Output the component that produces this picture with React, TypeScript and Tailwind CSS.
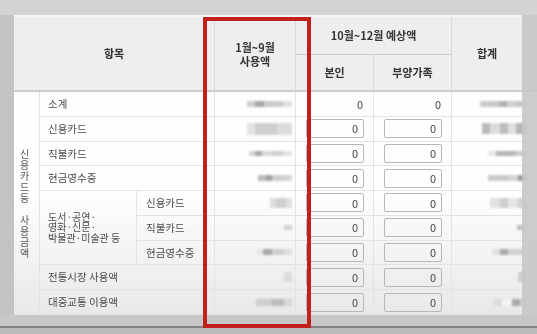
import React from 'react'

type Seg = [number, string]

const Blob = ({ segs, h }: { segs: Seg[]; h: number }) => (
  <div className="flex blur-[1.2px]" style={{ height: h }}>
    {segs.map(([w, c], i) => (
      <span key={i} style={{ width: w, background: c }} />
    ))}
  </div>
)

const usedBlobs: { segs: Seg[]; h: number }[] = [
  { segs: [[8, '#d0d0d0'], [9, '#a6a6a6'], [9, '#c8c8c8'], [10, '#cdcdcd'], [9, '#e2e2e2']], h: 6 },
  { segs: [[8, '#e4e4e4'], [22, '#cfcfcf'], [15, '#dcdcdc']], h: 12 },
  { segs: [[6, '#d8d8d8'], [7, '#a9a9a9'], [10, '#dcdcdc'], [11, '#d0d0d0'], [9, '#e4e4e4']], h: 5 },
  { segs: [[8, '#bcbcbc'], [6, '#a0a0a0'], [10, '#cfcfcf'], [10, '#d6d6d6']], h: 6 },
  { segs: [[6, '#dedede'], [10, '#cfcfcf'], [6, '#e0e0e0']], h: 10 },
  { segs: [[8, '#d4d4d4']], h: 5 },
  { segs: [[6, '#e6e6e6'], [9, '#a8a8a8'], [12, '#cfcfcf'], [8, '#dedede']], h: 6 },
  { segs: [[8, '#dcdcdc']], h: 10 },
  { segs: [[16, '#cfcfcf'], [12, '#bdbdbd'], [8, '#d8d8d8']], h: 7 },
]

const totalBlobs: { segs: Seg[]; h: number }[] = [
  { segs: [[10, '#cdcdcd'], [9, '#c9c9c9'], [8, '#b0b0b0'], [10, '#cdcdcd'], [9, '#c5c5c5']], h: 6 },
  { segs: [[8, '#b9b9b9'], [10, '#dedede'], [8, '#bcbcbc'], [8, '#e0e0e0'], [10, '#b6b6b6']], h: 11 },
  { segs: [[8, '#e8e8e8'], [20, '#b5b5b5'], [10, '#cdcdcd']], h: 5 },
  { segs: [[20, '#cbcbcb'], [10, '#d5d5d5'], [8, '#9d9d9d']], h: 6 },
  { segs: [[10, '#e2e2e2'], [8, '#cfcfcf'], [10, '#e6e6e6'], [8, '#d2d2d2']], h: 10 },
  { segs: [[9, '#bfbfbf']], h: 5 },
  { segs: [[8, '#e3e3e3'], [8, '#a9a9a9'], [18, '#d2d2d2']], h: 6 },
  { segs: [[8, '#cfcfcf']], h: 10 },
  { segs: [[8, '#dcdcdc'], [10, '#f3f3f3'], [8, '#a9a9a9'], [6, '#cfcfcf']], h: 7 },
]

const cell = 'border-r border-b border-[#e4e4e4] flex items-center text-[#4a4a4a]'
const head = 'border-r border-[#dadada] bg-[#efefef] flex items-center justify-center font-bold text-[#333] text-[11px]'

const Box = () => (
  <div className={`${cell} justify-end pr-[9px]`}>
    <div className="w-[58px] h-[19px] border border-[#b7b7b7] rounded-[2px] flex items-center justify-end pr-[5px] text-[11px] text-[#444]">
      0
    </div>
  </div>
)

const Rest = ({ i, input }: { i: number; input: boolean }) => (
  <>
    <div className={`${cell} justify-end pr-[3px]`}>
      <Blob {...usedBlobs[i]} />
    </div>
    {input ? (
      <>
        <Box />
        <Box />
      </>
    ) : (
      <>
        <div className={`${cell} justify-end pr-[10px] text-[11px] !text-[#444]`}>0</div>
        <div className={`${cell} justify-end pr-[10px] text-[11px] !text-[#444]`}>0</div>
      </>
    )}
    <div className="border-b border-[#e4e4e4] flex items-center justify-end pr-[11px]">
      <Blob {...totalBlobs[i]} />
    </div>
  </>
)

export default function App() {
  return (
    <div className="w-[537px] h-[334px] bg-[#c6c6c6] relative overflow-hidden font-['Noto_Sans_CJK_KR','Noto_Sans',sans-serif]">
      <div className="h-[15px] bg-[#d4d4d4]" />
      <div className="flex">
        <div className="w-[14px] shrink-0 bg-[#c3c3c3]" />
        <div className="w-[523px] opacity-[0.995] border-t-2 border-[#f6f6f6] grid grid-cols-[26px_97px_78px_81px_78px_78px_85px] grid-rows-[38px_37px_repeat(9,24.78px)] bg-[linear-gradient(to_bottom,#ffffff_0%,#ffffff_60%,#e9e9e9_100%)] text-[10.5px] text-[#4a4a4a]">
          <div className={`${head} col-span-3 row-span-2 border-b-2 border-b-[#cdcdcd]`}>항목</div>
          <div className={`${head} row-span-2 border-b-2 border-b-[#cdcdcd] flex-col leading-[14px]`}>
            <span>1월~9월</span>
            <span>사용액</span>
          </div>
          <div className={`${head} col-span-2 border-b border-b-[#cfcfcf]`}>10월~12월 예상액</div>
          <div className={`${head} row-span-2 border-r-0 border-b-2 border-b-[#cdcdcd] pr-[15px]`}>합계</div>
          <div className={`${head} border-b-2 border-b-[#cdcdcd]`}>본인</div>
          <div className={`${head} border-b-2 border-b-[#cdcdcd]`}>부양가족</div>

          <div className="row-span-9 border-r border-[#e4e4e4] flex items-center justify-center pr-[5px] pt-[2px] text-[10px] text-[#555]">
            <span className="[writing-mode:vertical-rl] [text-orientation:upright] tracking-[1px] leading-[12px]">
              신용카드등{'\u3000'}사용금액
            </span>
          </div>

          <div className={`${cell} col-span-2 pl-2`}>소계</div>
          <Rest i={0} input={false} />
          <div className={`${cell} col-span-2 pl-2`}>신용카드</div>
          <Rest i={1} input />
          <div className={`${cell} col-span-2 pl-2`}>직불카드</div>
          <Rest i={2} input />
          <div className={`${cell} col-span-2 pl-2`}>현금영수증</div>
          <Rest i={3} input />

          <div className={`${cell} row-span-3 pl-2 flex-col !items-start justify-center text-[10px] leading-[10.5px]`}>
            <span>도서·공연·</span>
            <span>영화·신문·</span>
            <span>박물관·미술관 등</span>
          </div>
          <div className={`${cell} pl-[9px]`}>신용카드</div>
          <Rest i={4} input />
          <div className={`${cell} pl-[9px]`}>직불카드</div>
          <Rest i={5} input />
          <div className={`${cell} pl-[9px]`}>현금영수증</div>
          <Rest i={6} input />

          <div className={`${cell} col-span-2 pl-2`}>전통시장 사용액</div>
          <Rest i={7} input />
          <div className={`${cell} col-span-2 pl-2`}>대중교통 이용액</div>
          <Rest i={8} input />
        </div>
      </div>
      <div className="h-[11px] bg-[#c8c8c8]" />
      <div className="h-[2px] bg-[#838383]" />
      <div className="h-[10px] bg-[#bababa]" />

      <div className="absolute left-[522px] top-[15px] w-[15px] h-[311px] bg-[#c7c7c7]/90" />
      <div className="absolute left-[203px] top-[17px] w-[108px] h-[311px] border-4 border-[#c3201c]" />
    </div>
  )
}
